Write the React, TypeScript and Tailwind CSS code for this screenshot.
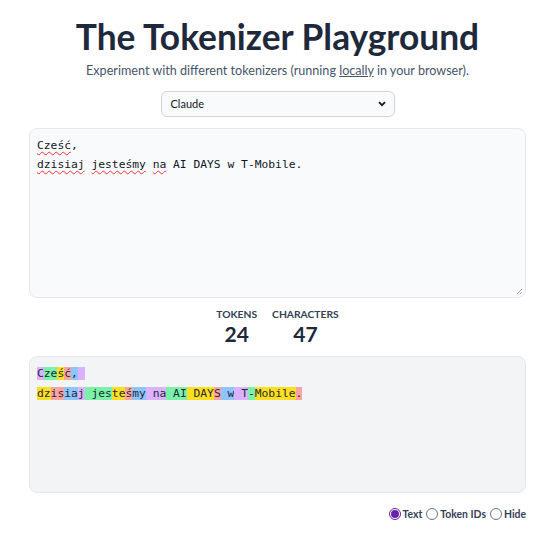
import React from "react";

const tokens: [string, string][] = [
  ["C", "bg-purple-300"],
  ["ze", "bg-green-300"],
  ["ś", "bg-yellow-300"],
  ["ć", "bg-red-300"],
  [",", "bg-blue-300"],
  [" ", "bg-purple-300"],
  ["\n", "bg-green-300"],
  ["dz", "bg-yellow-300"],
  ["is", "bg-red-300"],
  ["ia", "bg-blue-300"],
  ["j", "bg-purple-300"],
  [" jes", "bg-green-300"],
  ["te", "bg-yellow-300"],
  ["ś", "bg-red-300"],
  ["my", "bg-blue-300"],
  [" na", "bg-purple-300"],
  [" AI", "bg-green-300"],
  [" DAY", "bg-yellow-300"],
  ["S", "bg-red-300"],
  [" w", "bg-blue-300"],
  [" T", "bg-purple-300"],
  ["-", "bg-green-300"],
  ["Mobile", "bg-yellow-300"],
  [".", "bg-red-300"],
];

const mono = { fontFamily: '"DejaVu Sans Mono", monospace' };
const wavy = "underline decoration-wavy decoration-red-500 decoration-1 underline-offset-2";

export default function App() {
  return (
    <div
      className="w-[559px] min-h-[544px] bg-white pl-[29px] pr-[33px] pt-[12px] text-[#1e293b]"
      style={{ fontFamily: 'Lato, sans-serif' }}
    >
      <h1 className="text-center text-[35.3px] font-bold leading-[50px] text-[#1e293b]">
        The Tokenizer Playground
      </h1>
      <p className="text-center text-[12.6px] leading-[18px] text-[#475569]">
        Experiment with different tokenizers (running{" "}
        <span className="underline">locally</span> in your browser).
      </p>
      <div className="mt-[11px] flex justify-center">
        <div className="flex h-[26px] w-[234px] items-center justify-between rounded-md border border-gray-300 bg-gray-50 pl-[9px] pr-[8px] text-[11px] text-gray-900">
          <span>Claude</span>
          <svg width="8" height="6" viewBox="0 0 8 6">
            <path d="M1 1.2 L4 4.2 L7 1.2" stroke="#111827" strokeWidth="1.8" fill="none" />
          </svg>
        </div>
      </div>
      <div className="relative mt-[11px] h-[170px] w-[497px] rounded-lg border border-gray-200 bg-gray-50 px-[7px] py-[7px]">
        <div className="whitespace-pre-wrap text-[11.3px] leading-[19px] text-gray-900" style={mono}>
          <span className={wavy}>Cześć</span>,{"\n"}
          <span className={wavy}>dzisiaj</span> <span className={wavy}>jesteśmy</span>{" "}
          <span className={wavy}>na</span> AI DAYS w T-Mobile.
        </div>
        <svg className="absolute bottom-[2px] right-[2px]" width="8" height="8" viewBox="0 0 8 8">
          <path d="M7 2 L2 7 M7 5 L5 7" stroke="#9ca3af" strokeWidth="1" />
        </svg>
      </div>
      <div className="mt-[9px] flex justify-center gap-[15px]">
        <div className="flex flex-col items-center">
          <span className="text-[10.3px] font-bold leading-[14px] text-[#334155]">TOKENS</span>
          <span className="text-[21px] font-bold leading-[26px] text-[#1e293b]">24</span>
        </div>
        <div className="flex flex-col items-center">
          <span className="text-[10.3px] font-bold leading-[14px] text-[#334155]">CHARACTERS</span>
          <span className="text-[21px] font-bold leading-[26px] text-[#1e293b]">47</span>
        </div>
      </div>
      <div className="mt-[9px] h-[137px] w-[497px] rounded-lg border border-gray-200 bg-gray-100 px-[7px] py-[7px]">
        <div className="whitespace-pre-wrap text-[11.3px] leading-[20px] text-gray-800" style={mono}>
          {tokens.map(([t, c], i) => (
            <span key={i} className={c}>
              {t}
            </span>
          ))}
        </div>
      </div>
      <div className="mt-[13px] flex justify-end gap-[4px] text-[10.4px] font-bold leading-[16px] text-[#334155]">
        {["Text", "Token IDs", "Hide"].map((l, i) => (
          <label key={l} className="flex items-center gap-[2px]">
            <span
              className={
                i === 0
                  ? "flex h-[12px] w-[12px] items-center justify-center rounded-full border border-[#6b21a8]"
                  : "h-[12px] w-[12px] rounded-full border border-gray-500 bg-white"
              }
            >
              {i === 0 && <span className="h-[8px] w-[8px] rounded-full bg-[#6b21a8]" />}
            </span>
            <span>{l}</span>
          </label>
        ))}
      </div>
    </div>
  );
}
